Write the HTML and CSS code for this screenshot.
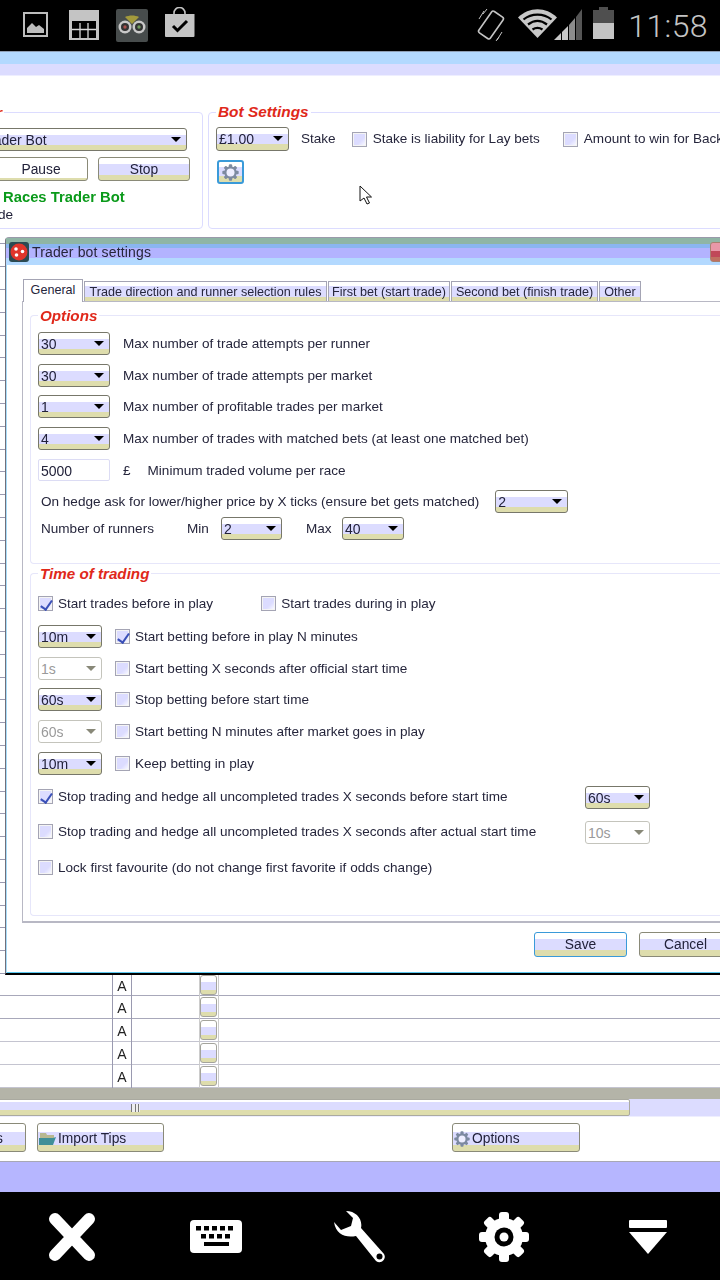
FILE: index.html
```html
<!DOCTYPE html>
<html lang="en">
<head>
<meta charset="utf-8">
<title>Trader bot settings</title>
<link rel="stylesheet" href="styles.css">
</head>
<body>
<svg class="defs" width="0" height="0" aria-hidden="true">
  <symbol id="cog" viewBox="0 0 52 52">
    <g>
      <rect x="21" y="1" width="10" height="50" rx="3"/>
      <rect x="21" y="1" width="10" height="50" rx="3" transform="rotate(45 26 26)"/>
      <rect x="21" y="1" width="10" height="50" rx="3" transform="rotate(90 26 26)"/>
      <rect x="21" y="1" width="10" height="50" rx="3" transform="rotate(135 26 26)"/>
      <circle cx="26" cy="26" r="19"/>
    </g>
  </symbol>
</svg>
<div class="phone">
  <header class="statusbar">
    <div class="status-left">
      <svg class="ic-image" width="25" height="25" viewBox="0 0 25 25"><rect x="1" y="1" width="23" height="23" fill="none" stroke="#bdbdbd" stroke-width="2"/><path d="M4 21v-5l5-5 4 4 3-2 5 4v4z" fill="#bdbdbd"/></svg>
      <svg class="ic-grid" width="30" height="30" viewBox="0 0 30 30"><rect width="30" height="30" fill="#c4c4c4"/><rect x="3" y="11" width="24" height="17" fill="#000"/><path d="M3 19.5h24M11 13v15M19 13v15" stroke="#d8d8d8" stroke-width="1.3"/></svg>
      <svg class="ic-owl" width="32" height="33" viewBox="0 0 32 33"><rect width="32" height="33" rx="2" fill="#474c4c"/><path d="M9 8c4-2 10-2 14 0l-7 7z" fill="#a39a3c"/><circle cx="9" cy="18" r="6.5" fill="#c9c9c9"/><circle cx="23" cy="18" r="6.5" fill="#c9c9c9"/><circle cx="9" cy="18" r="4" fill="#333"/><circle cx="23" cy="18" r="4" fill="#333"/><circle cx="9" cy="18" r="1.7" fill="#a8504c"/><circle cx="23" cy="18" r="1.7" fill="#6f9c5c"/></svg>
      <svg class="ic-bag" width="31" height="31" viewBox="0 0 31 31"><path d="M10 9V6a5.500 5.500 0 0 1 11 0v3" fill="none" stroke="#c4c4c4" stroke-width="1.600"/><path d="M1 7h29.500v22a1 1 0 0 1-1 1H2a1 1 0 0 1-1-1z" fill="#c4c4c4"/><path d="M9 19l4.500 4.500L23 14" fill="none" stroke="#000" stroke-width="3"/></svg>
    </div>
    <div class="status-right">
      <svg class="ic-rotate" width="30" height="34" viewBox="0 0 30 34"><g transform="rotate(35 15 17)"><rect x="8" y="4" width="14" height="26" rx="2" fill="none" stroke="#c4c4c4" stroke-width="1.600"/></g><path d="M8 3L3 11M26 24l-5 8M11 1L7 6M23 29l-3 4" stroke="#c4c4c4" stroke-width="1"/></svg>
      <svg class="ic-wifi" width="39" height="29" viewBox="0 0 39 29"><path d="M19.500 29L0 8.500C11-2.500 28-2.500 39 8.500z" fill="#c8c8c8"/><path d="M5.500 10.500c8-6.500 20-6.500 28 0M10 15.500c6-4.500 13-4.500 19 0M14.500 20.500c3-2 7-2 10 0" fill="none" stroke="#000" stroke-width="2.200"/></svg>
      <svg class="ic-signal" width="28" height="32" viewBox="0 0 28 32"><path d="M0 32l7-7v7z" fill="#c8c8c8"/><path d="M8 24l6-6v14H8z" fill="#c8c8c8"/><path d="M15 17l6-7v22h-6z" fill="#8c8c8c"/><path d="M22 9l6-8v31h-6z" fill="#555"/></svg>
      <svg class="ic-batt" width="21" height="32" viewBox="0 0 21 32"><path d="M6 0h9v3h6v13H0V3h6z" fill="#4f4f4f"/><rect y="16" width="21" height="16" fill="#c4c4c4"/></svg>
      <span class="clock">11:58</span>
    </div>
  </header>

  <main class="desktop">
    <div class="appbar"></div>

    <section class="panels">
      <div class="group group-bot">
        <span class="legend legend-bot">Trader</span>
        <div class="dd dd-bot">Trader Bot</div>
        <div class="btn-row">
          <button class="btn btn-pause">Pause</button>
          <button class="btn btn-band btn-stop">Stop</button>
        </div>
        <div class="bot-name">Races Trader Bot</div>
        <div class="bot-mode">Trade</div>
      </div>
      <div class="group group-settings">
        <span class="legend legend-settings">Bot Settings</span>
        <div class="stake-row">
          <div class="dd dd-stake">£1.00</div>
          <span class="lbl stake-lbl">Stake</span>
          <span class="cb"></span>
          <span class="lbl liab-lbl">Stake is liability for Lay bets</span>
          <span class="cb"></span>
          <span class="lbl win-lbl">Amount to win for Back bets</span>
        </div>
        <button class="btn-cog"><svg width="17" height="17" class="cog-small"><use href="#cog"/><circle cx="8.500" cy="8.500" r="4" fill="#eef"/></svg></button>
      </div>
    </section>

    <section class="grid">
      <div class="grid-filler"></div>
      <div class="grid-row"><span></span><span class="cell-a">A</span><span></span><span class="cell-b"><i class="mini"></i></span></div>
      <div class="grid-row"><span></span><span class="cell-a">A</span><span></span><span class="cell-b"><i class="mini"></i></span></div>
      <div class="grid-row"><span></span><span class="cell-a">A</span><span></span><span class="cell-b"><i class="mini"></i></span></div>
      <div class="grid-row"><span></span><span class="cell-a">A</span><span></span><span class="cell-b"><i class="mini"></i></span></div>
      <div class="grid-row"><span></span><span class="cell-a">A</span><span></span><span class="cell-b"><i class="mini"></i></span></div>
    </section>
    <div class="grid-sep"></div>
    <div class="hscroll"><div class="thumb"><i class="grip"></i></div></div>
    <div class="toolbar">
      <button class="tbtn tbtn-first">Tips</button>
      <button class="tbtn tbtn-import"><svg width="17" height="15" viewBox="0 0 17 15"><path d="M1 2h6l1 2h7v3H1z" fill="#b8b890"/><path d="M0 14V7h14l3-1-3 8z" fill="#3f8f98"/></svg>Import Tips</button>
      <button class="tbtn tbtn-options"><svg width="16" height="16" class="cog-small"><use href="#cog"/><circle cx="8" cy="8" r="3.500" fill="#eef"/></svg>Options</button>
    </div>
    <div class="footerbar"></div>

    <svg class="pointer" width="14" height="21" viewBox="0 0 14 21"><path d="M1 1v15l4-3 3 6 2.500-1-3-6h5z" fill="#fff" stroke="#111" stroke-width="1"/></svg>

    <div class="dialog">
      <div class="titlebar">
        <svg width="20" height="20" viewBox="0 0 20 20"><rect width="20" height="20" rx="3" fill="#2b4a52"/><circle cx="10" cy="10" r="8.500" fill="#e0352b"/><circle cx="7" cy="7" r="1.800" fill="#fff"/><circle cx="13.500" cy="9.500" r="1.800" fill="#fff"/><circle cx="7.500" cy="13" r="1.800" fill="#fff"/></svg>
        <span class="title">Trader bot settings</span>
        <span class="close"></span>
      </div>
      <div class="dlg-body">
        <nav class="tabs">
          <span class="tab tab-on">General</span>
          <span class="tab t-rules">Trade direction and runner selection rules</span>
          <span class="tab t-first">First bet (start trade)</span>
          <span class="tab t-second">Second bet (finish trade)</span>
          <span class="tab t-other">Other</span>
        </nav>
        <div class="pane">
          <div class="group2 group-options">
            <span class="legend legend-opt">Options</span>
            <div class="row r32"><div class="dd dd-72">30</div><span class="lbl">Max number of trade attempts per runner</span></div>
            <div class="row r32"><div class="dd dd-72">30</div><span class="lbl">Max number of trade attempts per market</span></div>
            <div class="row r32"><div class="dd dd-72">1</div><span class="lbl">Max number of profitable trades per market</span></div>
            <div class="row r32"><div class="dd dd-72">4</div><span class="lbl">Max number of trades with matched bets (at least one matched bet)</span></div>
            <div class="row r-vol"><div class="input">5000</div><span class="lbl pound">£</span><span class="lbl">Minimum traded volume per race</span></div>
            <div class="row r-hedge"><span class="lbl hedge-lbl">On hedge ask for lower/higher price by X ticks (ensure bet gets matched)</span><div class="dd dd-hedge">2</div></div>
            <div class="row r-run"><span class="lbl run-lbl">Number of runners</span><span class="lbl min-lbl">Min</span><div class="dd dd-min">2</div><span class="lbl max-lbl">Max</span><div class="dd dd-max">40</div></div>
          </div>
          <div class="group2 group-time">
            <span class="legend legend-opt">Time of trading</span>
            <div class="row r-first"><span class="cb on"></span><span class="lbl first-lbl">Start trades before in play</span><span class="cb"></span><span class="lbl">Start trades during in play</span></div>
            <div class="row r32"><div class="dd dd-64">10m</div><span class="cb on"></span><span class="lbl">Start betting before in play N minutes</span></div>
            <div class="row r32"><div class="dd dd-64 off">1s</div><span class="cb"></span><span class="lbl">Start betting X seconds after official start time</span></div>
            <div class="row r32"><div class="dd dd-64">60s</div><span class="cb"></span><span class="lbl">Stop betting before start time</span></div>
            <div class="row r32"><div class="dd dd-64 off">60s</div><span class="cb"></span><span class="lbl">Start betting N minutes after market goes in play</span></div>
            <div class="row r-keep"><div class="dd dd-64">10m</div><span class="cb"></span><span class="lbl">Keep betting in play</span></div>
            <div class="row r-stop"><span class="cb on"></span><span class="lbl stop-lbl">Stop trading and hedge all uncompleted trades X seconds before start time</span><div class="dd dd-65">60s</div></div>
            <div class="row r-stop"><span class="cb"></span><span class="lbl stop-lbl">Stop trading and hedge all uncompleted trades X seconds after actual start time</span><div class="dd dd-65 off">10s</div></div>
            <div class="row r-lock"><span class="cb"></span><span class="lbl">Lock first favourite (do not change first favorite if odds change)</span></div>
          </div>
        </div>
        <div class="dlg-actions">
          <button class="btn btn-band btn-save">Save</button>
          <button class="btn btn-band btn-cancel">Cancel</button>
        </div>
      </div>
    </div>
  </main>

  <nav class="navbar">
    <svg class="nav-ic" width="52" height="52" viewBox="0 0 52 52"><path d="M9 8l34 36M43 8L9 44" stroke="#fff" stroke-width="12" stroke-linecap="round"/></svg>
    <svg class="nav-ic" width="52" height="34" viewBox="0 0 52 34"><rect width="52" height="33" rx="4" fill="#fff"/><g fill="#000"><rect x="6" y="6" width="5" height="4.500"/><rect x="14" y="6" width="5" height="4.500"/><rect x="22" y="6" width="5" height="4.500"/><rect x="30" y="6" width="5" height="4.500"/><rect x="38" y="6" width="5" height="4.500"/><rect x="11" y="14" width="5" height="4.500"/><rect x="19" y="14" width="5" height="4.500"/><rect x="27" y="14" width="5" height="4.500"/><rect x="35" y="14" width="5" height="4.500"/><rect x="14" y="22" width="25" height="4"/></g></svg>
    <svg class="nav-ic" width="52" height="52" viewBox="0 0 52 52"><path d="M12 0C22 0 29 8 27 17L50 43C53 48 47 54 42 50L22 25C12 27 2 24 0 11L7 19L17 15L19 7Z" fill="#fff"/><circle cx="45.500" cy="45.500" r="3" fill="#000"/></svg>
    <svg class="nav-ic cog-white" width="52" height="52"><use href="#cog"/><circle cx="26" cy="26" r="9.500" fill="#000"/><circle cx="26" cy="26" r="4.500" fill="#fff"/></svg>
    <svg class="nav-ic" width="38" height="34" viewBox="0 0 38 34"><rect width="38" height="8" rx="1" fill="#fff"/><path d="M0 12h38L19 34z" fill="#fff"/></svg>
  </nav>
</div>
</body>
</html>
```
FILE: styles.css
```css
* { box-sizing: border-box; }
html, body { margin: 0; padding: 0; }
body { width: 720px; height: 1280px; overflow: hidden; background: #000; font-family: "Liberation Sans", Arial, sans-serif; color: #22223a; }
.defs { position: absolute; }
.phone { width: 720px; height: 1280px; display: flex; flex-direction: column; overflow: hidden; }

/* status bar */
.statusbar { height: 51px; flex: none; background: #000; display: flex; justify-content: space-between; align-items: flex-start; }
.status-left { display: flex; align-items: flex-start; padding-left: 23px; }
.ic-image { margin-top: 12px; }
.ic-grid { margin: 10px 0 0 21px; }
.ic-owl { margin: 9px 0 0 17px; }
.ic-bag { margin: 7px 0 0 16px; }
.status-right { display: flex; align-items: flex-start; padding-right: 12px; }
.ic-rotate { margin: 8px 0 0 0; }
.ic-wifi { margin: 9px 0 0 12px; }
.ic-signal { margin: 8px 0 0 -3px; }
.ic-batt { margin: 7px 0 0 11px; }
.clock { font-family: Roboto, sans-serif; font-weight: 300; font-size: 32px; line-height: 52px; color: #c4c4c4; margin-left: 14px; letter-spacing: .4px; }

/* desktop */
.desktop { position: relative; flex: 1; min-height: 0; background: #fff; display: flex; flex-direction: column; filter: blur(.35px); }
.appbar { height: 25px; flex: none; background: linear-gradient(#8f9fb5 0 1px, #b3d9ff 1px 13px, #dcdcff 13px 24px, #eef 24px); }
.panels { height: 164px; flex: none; padding-top: 36px; display: flex; gap: 5px; margin-left: -60px; background: #fff; }

.group { position: relative; flex: none; height: 117px; border: 1px solid #dcdcff; border-radius: 4px; }
.group-bot { width: 263px; padding: 15px 0 0 19px; }
.group-settings { width: 600px; padding: 14px 0 0 7px; }
.legend { position: absolute; background: #fff; font-weight: bold; font-style: italic; color: #e0281a; font-size: 15.400px; line-height: 17px; padding: 0 2px; white-space: nowrap; }
.legend-bot { right: 198px; top: -9px; }
.legend-settings { left: 7px; top: -10px; }
.legend-opt { left: 7px; top: -9px; font-size: 15.200px; line-height: 18px; }

/* dropdowns */
.dd { position: relative; flex: none; height: 23px; border: 1px solid #77776a; border-radius: 3px; padding: 0 0 0 2px; font-size: 14px; line-height: 23px; color: #22223a; background: linear-gradient(#fff 0 6px, #dcdcff 6px 16px, #deddad 16px); }
.dd::after { content: ""; position: absolute; right: 5px; top: 8px; border-left: 5px solid transparent; border-right: 5px solid transparent; border-top: 5px solid #000; }
.dd.off { background: #fff; color: #9a9a9a; border-color: #c4c4bc; }
.dd.off::after { border-top-color: #888878; }
.dd-bot { width: 227px; padding-left: 20px; }
.dd-stake { width: 73px; height: 24px; }
.dd-72 { width: 72px; }
.dd-64 { width: 64px; }
.dd-65 { width: 65px; }
.dd-hedge { width: 73px; margin-left: 16px; }
.dd-min { width: 61px; }
.dd-max { width: 62px; }

/* buttons */
.btn { display: block; padding: 0; border: 1px solid #8a8a78; border-radius: 3px; font-family: inherit; font-size: 13.800px; color: #22223a; background: linear-gradient(#fff 0 20px, #deddad 20px); text-align: center; }
.btn-band { background: linear-gradient(#fff 0 6px, #dcdcff 6px 17px, #deddad 17px); }
.btn-row { display: flex; gap: 10px; margin: 6px 0 0 34px; }
.btn-pause { width: 94px; height: 24px; }
.btn-stop { width: 92px; height: 24px; }
.bot-name { margin-top: 8px; padding-left: 43px; font-size: 14.800px; line-height: 16px; font-weight: bold; color: #0a9a1a; white-space: nowrap; }
.bot-mode { margin-top: 2px; padding-left: 18px; font-size: 13.600px; line-height: 16px; }

.stake-row { display: flex; align-items: center; height: 24px; }
.lbl { font-size: 13.550px; line-height: 16px; white-space: nowrap; color: #26263c; }
.stake-lbl { margin-left: 12px; margin-right: 16px; }
.liab-lbl { margin-left: 6px; margin-right: 23px; }
.win-lbl { margin-left: 6px; }
.btn-cog { display: flex; align-items: center; justify-content: center; width: 27px; height: 24px; margin: 9px 0 0 1px; padding: 0; border: 2px solid #3a9ad9; border-radius: 3px; background: linear-gradient(#fff 0 5px, #dcdcff 5px 14px, #deddad 14px); }
.cog-small { fill: #7d8aa0; }

/* check boxes */
.cb { position: relative; flex: none; width: 15px; height: 15px; border: 1px solid #a4a4b4; background: linear-gradient(135deg, #dcdcff 0 60%, #fff); box-shadow: inset 0 0 0 1px #f4f4f4; }
.cb.on::after { content: ""; position: absolute; left: 4px; top: 1px; width: 5px; height: 10px; border-right: 2px solid #3a50b8; border-bottom: 2px solid #3a50b8; transform: rotate(35deg); }

/* grid behind dialog */
.grid { flex: 1; min-height: 0; display: flex; flex-direction: column; }
.grid-filler { flex: 1; background: repeating-linear-gradient(to top, #9a9ab0 0 1px, #fff 1px 22.800px); }
.grid-row { flex: none; height: 22.900px; display: grid; grid-template-columns: 112px 20px 67px 20px 1fr; border-bottom: 1px solid #a8a8ba; }
.grid-row:nth-child(n+4) { border-bottom-color: #c4c4d0; }
.cell-a { border-left: 1px solid #9a9ab0; border-right: 1px solid #9a9ab0; text-align: center; font-size: 14px; line-height: 24px; color: #222; }
.cell-b { border-left: 1px solid #ccc; border-right: 1px solid #ccc; display: flex; justify-content: flex-start; }
.mini { display: block; width: 17px; height: 20px; margin-top: 1px; border: 1.500px solid #a4a49c; border-radius: 3px; background: linear-gradient(#fff 0 6px, #dcdcff 6px 14px, #deddad 14px); }
.grid-sep { height: 11px; flex: none; background: #b4b4a8; }
.hscroll { height: 18px; flex: none; background: #dcdcff; border-bottom: 1px solid #eef; display: flex; }
.thumb { width: 1000px; margin-left: -370px; height: 17px; border: 1px solid #aaaaa0; border-radius: 2px; background: linear-gradient(#fff 0 2px, #dcdcff 2px 10px, #deddad 10px); display: flex; justify-content: center; align-items: center; }
.grip { display: block; width: 9px; height: 8px; margin-left: 10px; background: repeating-linear-gradient(to right, #777 0 1px, #eee 1px 3.500px); }
.toolbar { height: 44px; flex: none; padding-top: 6px; display: flex; margin-left: -40px; gap: 11px; background: #fff; }
.tbtn { display: flex; align-items: center; gap: 2px; height: 29px; padding: 2px 0 0 1px; border: 1px solid #8a8a78; border-radius: 3px; font-family: inherit; font-size: 13.800px; color: #22223a; background: linear-gradient(#fff 0 8px, #dcdcff 8px 21px, #deddad 21px); }
.tbtn-first { width: 66px; justify-content: flex-end; padding-right: 22px; }
.tbtn-import { width: 127px; }
.tbtn-options { width: 128px; margin-left: 277px; }
.tbtn svg { flex: none; }
.footerbar { height: 31px; flex: none; background: linear-gradient(#a8a8b4 0 1px, #b6b6ff 1px); }

/* mouse pointer */
.pointer { position: absolute; left: 359px; top: 134px; }

/* dialog */
.dialog { position: absolute; left: 5px; top: 186px; width: 770px; height: 738px; background: #fff; border: 1px solid #70707c; border-top-color: #9a9aaa; border-bottom: 2px solid #000; border-radius: 4px 4px 0 0; box-shadow: inset 1px 0 0 #a8dcf8, inset 0 -1px 0 #5ac8f0; }
.titlebar { height: 27px; display: flex; align-items: center; gap: 3px; padding-left: 3px; background: linear-gradient(#8fb5a5 0 6px, #8ab5f0 6px 10px, #b3b3ff 10px 20px, #b3d9ff 20px); }
.title { font-size: 14px; color: #26263a; letter-spacing: .15px; }
.close { width: 59px; height: 20px; margin-left: auto; margin-right: 5px; margin-top: 1px; border: 1px solid #a88070; border-radius: 3px; background: linear-gradient(#e898a8 0 8px, #c04858 8px 14px, #c07060 14px); }
.dlg-body { padding: 14px 0 0 16px; }
.tabs { display: flex; align-items: flex-end; height: 22px; gap: 1px; margin-left: 1px; }
.tab { flex: none; height: 20px; font-size: 12.600px; line-height: 21px; text-align: center; border: 1px solid #a4a4b4; border-bottom: 0; color: #26263c; white-space: nowrap; background: linear-gradient(#fff 0 4px, #dcdcff 4px 15px, #deddad 15px); }
.tab-on { width: 60px; height: 23px; line-height: 21px; background: #fff; position: relative; margin-bottom: -1px; z-index: 1; }
.t-rules { width: 243px; }
.t-first { width: 122px; }
.t-second { width: 147px; }
.t-other { width: 42px; }
.pane { height: 622px; border: 1px solid #b8b8c4; border-right: 0; border-bottom-width: 2px; padding: 13px 0 0 7px; }
.group2 { position: relative; border: 1px solid #e6e6fa; border-right: 0; border-radius: 4px 0 0 4px; }
.group-options { height: 249px; padding: 16px 0 0 7px; }
.group-time { height: 343px; margin-top: 9px; padding: 22px 0 0 7px; }
.row { display: flex; align-items: flex-start; }
.row .lbl { line-height: 23px; }
.row .dd + .lbl { margin-left: 13px; }
.row .dd + .cb { margin: 4px 0 0 13px; }
.row .cb + .lbl { margin-left: 5px; }
.r32 { height: 31.700px; }
.r-vol { height: 31px; }
.input { width: 72px; height: 22px; flex: none; border: 1px solid #dcdcf4; border-radius: 2px; padding-left: 2px; font-size: 14px; line-height: 22px; }
.row .pound { margin-left: 13px; margin-right: 17px; }
.r-hedge { height: 27px; }
.hedge-lbl { margin-left: 3px; }
.run-lbl { margin-left: 3px; width: 146px; }
.min-lbl { width: 34px; }
.row .dd + .max-lbl { margin-left: 24px; width: 36px; }
.r-first { height: 29px; }
.r-first .cb { margin-top: 0; }
.row.r-first .lbl { line-height: 15px; }
.row .first-lbl { margin-right: 48px; }
.r-keep { height: 34px; }
.r-stop { height: 35px; }
.r-stop .cb { margin-top: 3px; }
.row .stop-lbl { width: 527px; line-height: 22px; }
.r-lock .cb { margin-top: 4px; }
.dlg-actions { display: flex; gap: 12px; padding: 9px 0 0 512px; }
.btn-save { width: 93px; height: 25px; border: 1.500px solid #3a9ad9; }
.btn-cancel { width: 93px; height: 25px; }

/* nav bar */
.navbar { height: 88px; flex: none; padding-top: 2px; background: #000; display: grid; grid-template-columns: repeat(5, 144px); align-items: center; justify-items: center; }
.cog-white { fill: #fff; }
```
